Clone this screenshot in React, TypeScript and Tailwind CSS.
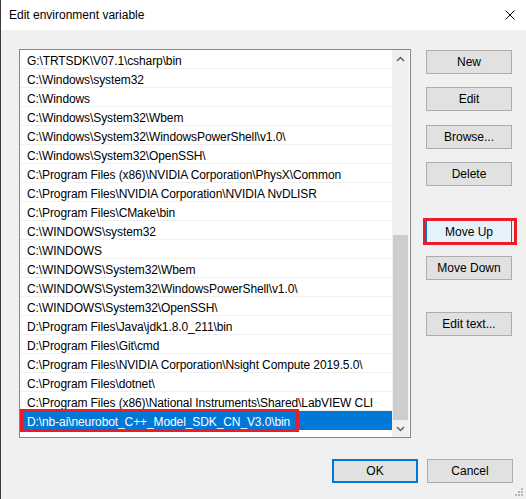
import { useState } from "react";

const paths = [
  "G:\\TRTSDK\\V07.1\\csharp\\bin",
  "C:\\Windows\\system32",
  "C:\\Windows",
  "C:\\Windows\\System32\\Wbem",
  "C:\\Windows\\System32\\WindowsPowerShell\\v1.0\\",
  "C:\\Windows\\System32\\OpenSSH\\",
  "C:\\Program Files (x86)\\NVIDIA Corporation\\PhysX\\Common",
  "C:\\Program Files\\NVIDIA Corporation\\NVIDIA NvDLISR",
  "C:\\Program Files\\CMake\\bin",
  "C:\\WINDOWS\\system32",
  "C:\\WINDOWS",
  "C:\\WINDOWS\\System32\\Wbem",
  "C:\\WINDOWS\\System32\\WindowsPowerShell\\v1.0\\",
  "C:\\WINDOWS\\System32\\OpenSSH\\",
  "D:\\Program Files\\Java\\jdk1.8.0_211\\bin",
  "D:\\Program Files\\Git\\cmd",
  "C:\\Program Files\\NVIDIA Corporation\\Nsight Compute 2019.5.0\\",
  "C:\\Program Files\\dotnet\\",
  "C:\\Program Files (x86)\\National Instruments\\Shared\\LabVIEW CLI",
  "D:\\nb-ai\\neurobot_C++_Model_SDK_CN_V3.0\\bin",
];

function Btn({ label, className = "" }: { label: string; className?: string }) {
  return (
    <button
      className={`w-[86px] h-[24px] bg-[#e1e1e1] border border-[#adadad] text-[12px] text-black ${className}`}
    >
      {label}
    </button>
  );
}

export default function App() {
  const [selected, setSelected] = useState(paths.length - 1);

  return (
    <div className="w-[526px] h-[499px] flex flex-col border-l border-[#3a3a3a] bg-[#f0f0f0] font-['Liberation_Sans',Arial,sans-serif] text-[12px] text-black select-none">
      {/* Title bar */}
      <div className="h-[30px] bg-white flex items-center justify-between pl-[8px] pr-[10px]">
        <span>Edit environment variable</span>
        <svg width="10" height="10" viewBox="0 0 10 10" className="mr-[1px]">
          <path d="M0.5 0.5 L9.5 9.5 M9.5 0.5 L0.5 9.5" stroke="#000" strokeWidth="1" />
        </svg>
      </div>

      {/* Body */}
      <div className="relative flex-1 pt-[19px] pl-[18px]">
        <div className="flex gap-[15px]">
          {/* List box */}
          <div className="relative w-[392px] h-[389px] border border-[#828790] bg-white flex">
            <div className="w-[372px] flex flex-col">
              {paths.map((p, i) => (
                <div
                  key={i}
                  onClick={() => setSelected(i)}
                  className={`h-[19px] shrink-0 pl-[7px] leading-[22px] tracking-[-0.1px] border-b whitespace-nowrap overflow-hidden ${
                    selected === i
                      ? "bg-[#0078d7] text-white border-[#0078d7]"
                      : "border-[#f0f0f0]"
                  }`}
                >
                  {p}
                </div>
              ))}
            </div>
            {/* Scrollbar */}
            <div className="w-[17px] h-full bg-[#f0f0f0] flex flex-col items-center">
              <div className="h-[17px] w-full flex items-center justify-center">
                <svg width="9" height="6" viewBox="0 0 9 6">
                  <path d="M1 5 L4.5 1.5 L8 5" stroke="#606060" strokeWidth="1.5" fill="none" />
                </svg>
              </div>
              <div className="flex-1 w-full" />
              <div className="w-[15px] h-[185px] bg-[#cdcdcd]" />
              <div className="h-[17px] w-full flex items-center justify-center">
                <svg width="9" height="6" viewBox="0 0 9 6">
                  <path d="M1 1 L4.5 4.5 L8 1" stroke="#606060" strokeWidth="1.5" fill="none" />
                </svg>
              </div>
            </div>
            {/* highlight around selected entry */}
            <div className="absolute left-0 top-[359px] w-[279px] h-[23px] border-[3px] border-[#ed1c24] pointer-events-none" />
          </div>

          {/* Side buttons */}
          <div className="flex flex-col pt-[1px]">
            <Btn label="New" />
            <Btn label="Edit" className="mt-[13px]" />
            <Btn label="Browse..." className="mt-[14px]" />
            <Btn label="Delete" className="mt-[13px]" />
            <div className="relative mt-[34px]">
              <button className="w-[86px] h-[24px] bg-[#e5f1fb] border border-[#0078d7] text-[12px] text-black">
                Move Up
              </button>
              <div className="absolute -left-[3px] -right-[5px] -top-[2px] -bottom-[1px] border-[3px] border-[#ed1c24] pointer-events-none" />
            </div>
            <Btn label="Move Down" className="mt-[12px]" />
            <Btn label="Edit text..." className="mt-[32px]" />
          </div>
        </div>

        {/* OK / Cancel */}
        <div className="flex justify-end gap-[9px] pr-[13px] mt-[21px]">
          <button className="w-[86px] h-[24px] bg-[#e1e1e1] border-2 border-[#0078d7] text-[12px] text-black">
            OK
          </button>
          <Btn label="Cancel" />
        </div>

        {/* Resize grip */}
        <div className="absolute right-[3px] bottom-[3px] grid grid-cols-3 gap-[1px]">
          {[0, 0, 1, 0, 1, 1, 1, 1, 1].map((d, i) => (
            <div key={i} className={`w-[2px] h-[2px] ${d ? "bg-[#b8b8b8]" : ""}`} />
          ))}
        </div>
      </div>
    </div>
  );
}
